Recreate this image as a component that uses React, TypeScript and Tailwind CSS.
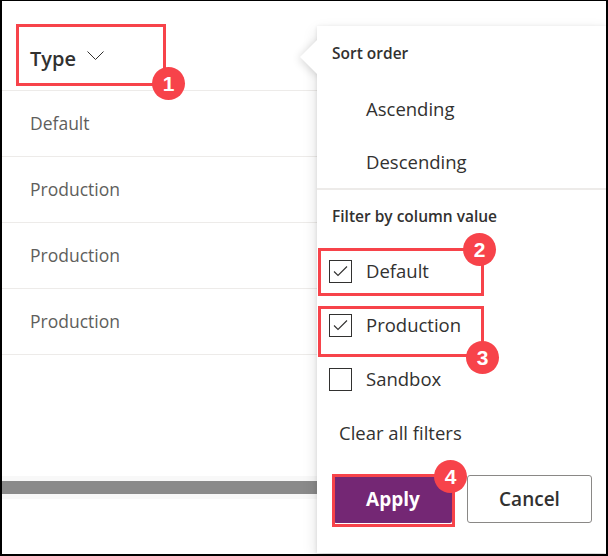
import React from "react";

const font = { fontFamily: '"Open Sans", "Noto Sans", sans-serif' };

function Badge({ n, className }: { n: string; className: string }) {
  return (
    <div
      className={`absolute w-[33px] h-[33px] rounded-full bg-[#f7434a] text-white flex items-center justify-center text-[21px] font-bold leading-none z-30 ${className}`}
      style={{ fontFamily: '"Liberation Sans", Arial, sans-serif' }}
    >
      {n}
    </div>
  );
}

function CheckRow({ label, checked }: { label: string; checked: boolean }) {
  return (
    <div className="h-[54px] flex items-center pl-[12px]">
      <div className="w-[23px] h-[23px] border border-[#323130] flex items-center justify-center">
        {checked && (
          <svg width="15" height="12" viewBox="0 0 15 12">
            <polyline points="1,6.5 5,10.5 14,1.5" fill="none" stroke="#323130" strokeWidth="1.1" />
          </svg>
        )}
      </div>
      <span className="ml-[14px] text-[18.5px] text-[#323130]">{label}</span>
    </div>
  );
}

export default function App() {
  const rows = ["Default", "Production", "Production", "Production"];
  return (
    <div
      className="relative w-[608px] h-[556px] bg-white border-black border-t border-l-2 border-r-2 border-b-2 overflow-hidden flex"
      style={font}
    >
      {/* left table */}
      <div className="w-[315px] flex flex-col">
        <div className="h-[90px] border-b border-[#edebe9] flex items-center pl-[28px] pt-[26px]">
          <span className="text-[20px] font-semibold text-[#323130]">Type</span>
          <svg className="ml-[11px] mt-[-6px]" width="17" height="10" viewBox="0 0 17 10">
            <polyline points="0.5,0.5 8.5,8.5 16.5,0.5" fill="none" stroke="#323130" strokeWidth="1" />
          </svg>
        </div>
        {rows.map((r, i) => (
          <div key={i} className="h-[66px] border-b border-[#edebe9] flex items-center pl-[28px]">
            <span className="text-[17.5px] text-[#605e5c]">{r}</span>
          </div>
        ))}
        <div className="h-[121px]" />
        <div className="h-[23px] bg-[#f8f8f8] flex items-center">
          <div className="h-[13px] w-full bg-[#8a8a8a]" />
        </div>
      </div>

      {/* callout panel */}
      <div className="relative mt-[25px] w-[289px] h-[527px] shadow-[0_6px_14px_rgba(0,0,0,0.13),0_1px_4px_rgba(0,0,0,0.11)]">
        <div className="absolute left-[-12px] top-[19px] w-[24px] h-[24px] bg-white rotate-45 shadow-[0_2px_8px_rgba(0,0,0,0.15)]" />
        <div className="relative bg-white h-full flex flex-col">
          <div className="h-[56px] flex items-center pl-[15px] text-[15.5px] font-semibold text-[#323130]">
            Sort order
          </div>
          <div className="h-[54px] flex items-center pl-[49px] text-[18.5px] text-[#323130]">Ascending</div>
          <div className="h-[52px] flex items-center pl-[49px] text-[18.5px] text-[#323130]">Descending</div>
          <div className="h-[2px] bg-[#edebe9]" />
          <div className="h-[54px] flex items-center pl-[15px] text-[15.5px] font-semibold text-[#323130]">
            Filter by column value
          </div>
          <CheckRow label="Default" checked />
          <CheckRow label="Production" checked />
          <CheckRow label="Sandbox" checked={false} />
          <div className="h-[54px] flex items-center pl-[22px] text-[18.5px] text-[#323130]">Clear all filters</div>
          <div className="mt-[15px] flex pl-[17px] gap-[15px]">
            <button className="w-[118px] h-[48px] bg-[#742774] text-white text-[19px] font-bold rounded-[2px]">
              Apply
            </button>
            <button className="w-[125px] h-[48px] border border-[#8a8886] bg-white text-[#323130] text-[19px] font-semibold rounded-[3px]">
              Cancel
            </button>
          </div>
        </div>
      </div>

      {/* annotation boxes */}
      <div className="absolute left-[14px] top-[23px] w-[150px] h-[62px] border-[3px] border-[#f7434a] z-20" />
      <div className="absolute left-[316px] top-[247px] w-[166px] h-[48px] border-[3px] border-[#f7434a] z-20" />
      <div className="absolute left-[316px] top-[305px] w-[166px] h-[51px] border-[3px] border-[#f7434a] z-20" />
      <div className="absolute left-[330px] top-[473px] w-[123px] h-[53px] border-[3px] border-[#f7434a] z-20" />

      <Badge n="1" className="left-[150px] top-[66px]" />
      <Badge n="2" className="left-[461px] top-[232px]" />
      <Badge n="3" className="left-[464px] top-[340px]" />
      <Badge n="4" className="left-[432px] top-[459px]" />
    </div>
  );
}
